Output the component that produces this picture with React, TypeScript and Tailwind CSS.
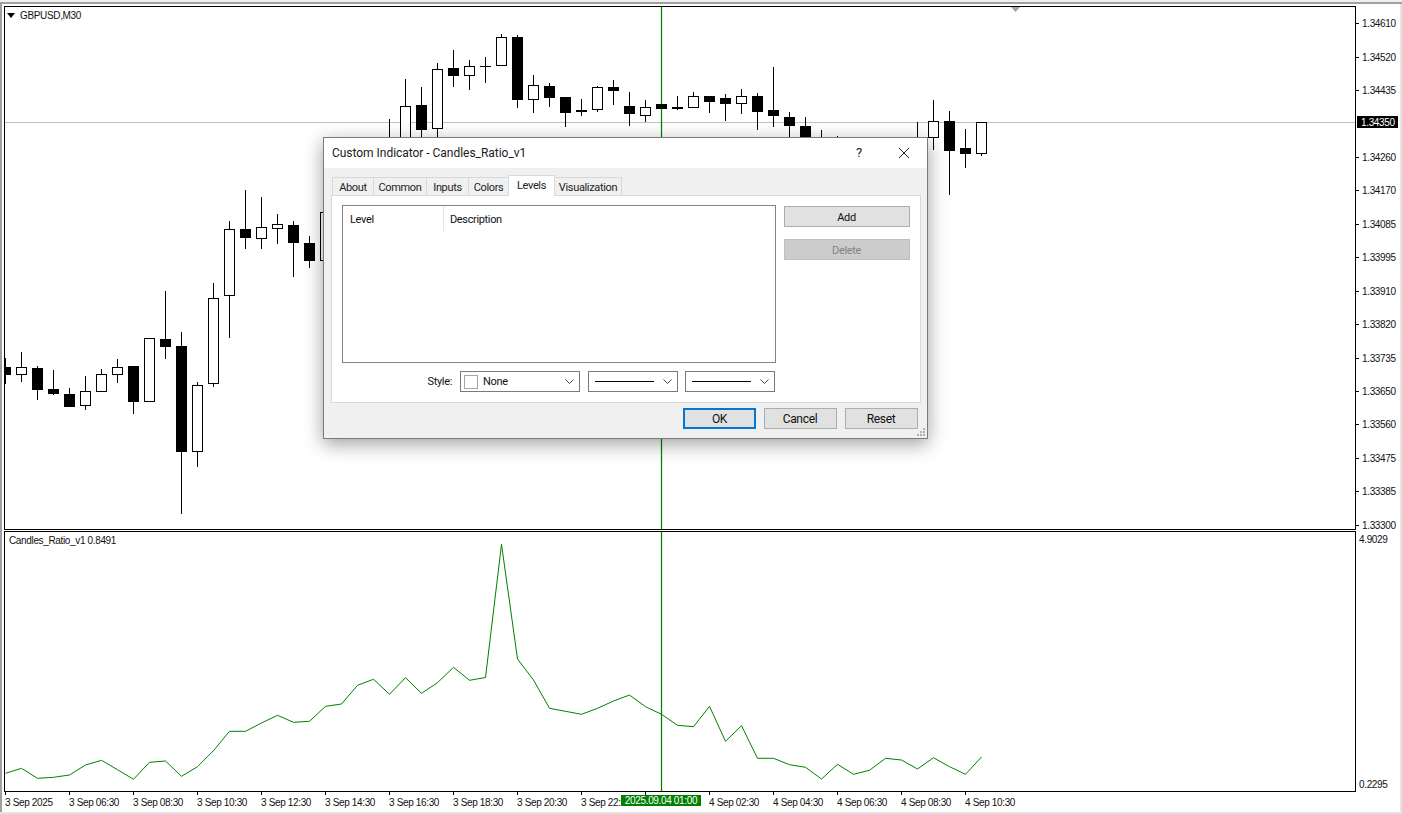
import React from "react";

type Candle = [number, number, number, number, number]; // x, bodyTop, bodyBottom, wickTop, wickBottom (x center)

const black: Candle[] = [
  [5, 367, 375, 358, 384],
  [37, 368, 390, 366, 400],
  [53, 389, 394, 370, 395],
  [69, 394, 407, 388, 407],
  [133, 366, 402, 366, 414],
  [165, 339, 347, 291, 359],
  [181, 346, 452, 332, 514],
  [245, 229, 238, 190, 249],
  [293, 225, 243, 221, 277],
  [309, 243, 261, 236, 268],
  [421, 105, 130, 87, 140],
  [453, 68, 76, 50, 87],
  [517, 37, 100, 35, 108],
  [549, 86, 98, 83, 107],
  [565, 97, 113, 97, 127],
  [581, 110, 112, 99, 116],
  [613, 87, 91, 80, 105],
  [629, 106, 114, 92, 126],
  [661, 104, 109, 104, 109],
  [677, 107, 109, 96, 110],
  [709, 96, 102, 96, 113],
  [725, 98, 104, 94, 121],
  [757, 96, 112, 93, 130],
  [773, 110, 116, 67, 127],
  [789, 117, 126, 112, 140],
  [805, 126, 140, 117, 140],
  [949, 121, 151, 111, 195],
  [965, 148, 154, 129, 168],
];

const white: Candle[] = [
  [21, 367, 375, 352, 382],
  [85, 391, 406, 376, 410],
  [101, 374, 392, 369, 392],
  [117, 367, 375, 359, 383],
  [149, 338, 402, 338, 402],
  [197, 385, 452, 382, 467],
  [213, 298, 384, 283, 387],
  [229, 229, 296, 221, 338],
  [261, 227, 239, 197, 249],
  [277, 224, 229, 214, 244],
  [325, 212, 261, 212, 261],
  [405, 106, 140, 79, 140],
  [437, 69, 129, 63, 140],
  [469, 66, 76, 60, 90],
  [501, 37, 66, 34, 66],
  [533, 85, 100, 75, 113],
  [597, 87, 110, 86, 112],
  [645, 107, 116, 100, 122],
  [693, 96, 108, 92, 108],
  [741, 96, 104, 89, 114],
  [933, 121, 138, 100, 150],
  [981, 122, 154, 122, 156],
];

const wicksOnly: [number, number, number][] = [
  [389, 119, 140],
  [821, 130, 140],
  [837, 136, 140],
  [917, 122, 140],
];

const dojis: [number, number, number, number][] = [
  [485, 66, 57, 83],
  [917, 137, 122, 140],
];

const line: [number, number][] = [
  [5, 773.3], [21, 768.3], [37, 778.3], [53, 777.3], [69, 775], [85, 765], [101, 760.3], [117, 769.7],
  [133, 779.3], [149, 762.3], [165, 761], [181, 776.3], [197, 766.7], [213, 750.7], [229, 731.3], [245, 731.3],
  [261, 723], [277, 715.3], [293, 722.3], [309, 721.3], [325, 706.3], [341, 704], [357, 685.3], [373, 679.3],
  [389, 694.3], [405, 677.7], [421, 693.3], [437, 682.7], [453, 667.3], [469, 680.3], [485, 677.5], [501, 544.3],
  [517, 659], [533, 680], [549, 708.3], [565, 711.3], [581, 714.3], [597, 708.3], [613, 701], [629, 695],
  [645, 706.7], [661, 714.3], [677, 725.3], [693, 726.7], [709, 706.3], [725, 741.3], [741, 725.7], [757, 758.3],
  [773, 758.3], [789, 764.7], [805, 767.3], [821, 779], [837, 764.3], [853, 774.3], [869, 770.3], [885, 758.3],
  [901, 760], [917, 769], [933, 757.7], [949, 766.7], [965, 774.3], [981, 757],
];

const prices = [
  "1.34610", "1.34520", "1.34435", "1.34350", "1.34260", "1.34170", "1.34085", "1.33995",
  "1.33910", "1.33820", "1.33735", "1.33650", "1.33560", "1.33475", "1.33385", "1.33300",
];

const times = [
  "3 Sep 2025", "3 Sep 06:30", "3 Sep 08:30", "3 Sep 10:30", "3 Sep 12:30", "3 Sep 14:30", "3 Sep 16:30",
  "3 Sep 18:30", "3 Sep 20:30", "3 Sep 22:", "", "4 Sep 02:30", "4 Sep 04:30", "4 Sep 06:30", "4 Sep 08:30",
  "4 Sep 10:30",
];

function PriceChart() {
  return (
    <svg width={1350} height={522} viewBox="5 7 1350 522" shapeRendering="crispEdges" className="block">
      <rect x={5} y={122} width={1350} height={1} fill="#c0c0c0" />
      <rect x={660.88} y={7} width={1.24} height={522} fill="#008000" shapeRendering="auto" />
      <polygon points="1011,7 1020,7 1015.5,12" fill="#a3a3a3" shapeRendering="auto" />
      {wicksOnly.map(([x, a, b]) => (
        <rect key={`w${x}`} x={x} y={a} width={1} height={b - a} fill="#000" />
      ))}
      {dojis.map(([x, y, a, b]) => (
        <g key={`d${x}`} fill="#000">
          <rect x={x} y={a} width={1} height={b - a} />
          <rect x={x - 5} y={y} width={11} height={1} />
        </g>
      ))}
      {black.map(([x, t, b, wt, wb]) => (
        <g key={`b${x}`} fill="#000">
          <rect x={x} y={wt} width={1} height={wb - wt} />
          <rect x={x - 5} y={t} width={11} height={b - t} />
        </g>
      ))}
      {white.map(([x, t, b, wt, wb]) => (
        <g key={`c${x}`}>
          <rect x={x} y={wt} width={1} height={wb - wt} fill="#000" />
          <rect x={x - 4.5} y={t + 0.5} width={10} height={b - t - 1} fill="#fff" stroke="#000" strokeWidth={1} />
        </g>
      ))}
    </svg>
  );
}

function RatioChart() {
  return (
    <svg width={1350} height={259} viewBox="5 532 1350 259" className="block">
      <rect x={660.88} y={532} width={1.24} height={259} fill="#008000" />
      <polyline
        points={line.map(([x, y]) => `${x + 0.5},${y}`).join(" ")}
        fill="none"
        stroke="#008000"
        strokeWidth={1}
      />
    </svg>
  );
}

function Chevron() {
  return (
    <svg width={9} height={6} viewBox="0 0 9 6" className="shrink-0">
      <polyline points="0.5,0.5 4.5,4.5 8.5,0.5" fill="none" stroke="#444" strokeWidth={1} />
    </svg>
  );
}

function Tab({ label, w, active }: { label: string; w: string; active?: boolean }) {
  return active ? (
    <div className={`${w} relative z-10 h-[21px] mb-[-1px] ml-[-1px] flex items-center justify-center bg-white border border-b-0 border-[#d9d9d9]`}>
      {label}
    </div>
  ) : (
    <div className={`${w} h-[18px] flex items-center justify-center pt-[3px] bg-[#f0f0f0] border border-b-0 border-[#d9d9d9] ml-[-1px] first:ml-0`}>
      {label}
    </div>
  );
}

function Dialog() {
  return (
    <div className="absolute left-[323px] top-[137px] w-[605px] h-[302px] flex flex-col bg-[#f0f0f0] border border-[#7a7a7a] shadow-[0_5px_18px_rgba(0,0,0,0.38)] text-[11px] tracking-[-0.35px] text-[#111] font-['Roboto',sans-serif]">
      <div className="h-[30px] shrink-0 bg-white flex items-center pl-[8px] text-[12px] tracking-[-0.03px] text-[#1a1a1a]">
        <span>Custom Indicator - Candles_Ratio_v1</span>
        <span className="ml-auto mr-[36px] text-[13px]">?</span>
        <svg width={12} height={12} viewBox="0 0 12 12" className="mr-[17px]">
          <path d="M1 1 L11 11 M11 1 L1 11" stroke="#222" strokeWidth={1} fill="none" />
        </svg>
      </div>
      <div className="flex-1 flex flex-col pl-[7px] pr-[6px]">
        <div className="flex items-end h-[27px] pl-[1px] shrink-0 text-[#222]">
          <Tab label="About" w="w-[42px]" />
          <Tab label="Common" w="w-[54px]" />
          <Tab label="Inputs" w="w-[43px]" />
          <Tab label="Colors" w="w-[41px]" />
          <Tab label="Levels" w="w-[47px]" active />
          <Tab label="Visualization" w="w-[68px]" />
        </div>
        <div className="w-[590px] h-[208px] bg-white border border-[#d9d9d9] pl-[10px] pt-[9px] flex flex-col">
          <div className="flex">
            <div className="w-[434px] h-[158px] border border-[#828282] bg-white flex items-start shrink-0">
              <div className="w-[101px] h-[25px] pl-[7px] pt-[3px] flex items-center border-r border-[#e5e5e5]">Level</div>
              <div className="h-[25px] pl-[6px] pt-[3px] flex items-center">Description</div>
            </div>
            <div className="ml-[8px] pt-[1px] flex flex-col gap-[12px]">
              <div className="w-[126px] h-[21px] pt-[3px] pr-[1px] flex items-center justify-center bg-[#e1e1e1] border border-[#adadad]">Add</div>
              <div className="w-[126px] h-[21px] pt-[3px] pr-[1px] flex items-center justify-center bg-[#cccccc] border border-[#bfbfbf] text-[#838383]">Delete</div>
            </div>
          </div>
          <div className="flex items-center h-[21px] mt-[8px]">
            <div className="w-[110px] text-right pt-px">Style:</div>
            <div className="ml-[8px] w-[120px] h-[21px] border border-[#7a7a7a] bg-white flex items-center pl-[3px] pr-[5px]">
              <div className="w-[14px] h-[14px] border border-[#a6a6a6] bg-white" />
              <span className="ml-[5px] flex-1 pt-[2px]">None</span>
              <Chevron />
            </div>
            <div className="ml-[8px] w-[90px] h-[21px] border border-[#7a7a7a] bg-white flex items-center pl-[6px] pr-[5px]">
              <div className="w-[59px] h-px bg-black" />
              <div className="flex-1" />
              <Chevron />
            </div>
            <div className="ml-[7px] w-[90px] h-[21px] border border-[#7a7a7a] bg-white flex items-center pl-[6px] pr-[5px]">
              <div className="w-[59px] h-px bg-black" />
              <div className="flex-1" />
              <Chevron />
            </div>
          </div>
        </div>
        <div className="flex justify-end gap-[8px] mt-[5px] pr-[3px] text-[12px] tracking-[-0.3px]">
          <div className="w-[73px] h-[21px] flex items-center justify-center bg-[#e1e1e1] border-2 border-[#0078d7]">OK</div>
          <div className="w-[73px] h-[21px] pr-[1px] flex items-center justify-center bg-[#e1e1e1] border border-[#adadad]">Cancel</div>
          <div className="w-[73px] h-[21px] pr-[1px] flex items-center justify-center bg-[#e1e1e1] border border-[#adadad]">Reset</div>
        </div>
      </div>
      <svg width={8} height={8} viewBox="0 0 8 8" className="absolute right-[2px] bottom-[2px]" fill="#b0b0b0" shapeRendering="crispEdges">
        <rect x={6} y={0} width={2} height={2} />
        <rect x={3} y={3} width={2} height={2} />
        <rect x={6} y={3} width={2} height={2} />
        <rect x={0} y={6} width={2} height={2} />
        <rect x={3} y={6} width={2} height={2} />
        <rect x={6} y={6} width={2} height={2} />
      </svg>
    </div>
  );
}

export default function App() {
  return (
    <div className="relative w-[1402px] h-[814px] overflow-hidden bg-white flex flex-col font-['Liberation_Sans',sans-serif] text-[10px] tracking-[-0.35px] text-[#111]">
      <div className="h-[2px] bg-[#f0f0f0] shrink-0" />
      <div className="h-[2px] bg-[#a0a0a0] shrink-0" />
      <div className="flex-1 flex border-r-2 border-[#e4e4e4]">
        <div className="w-[2px] bg-[#a0a0a0] shrink-0" />
        <div className="flex-1 flex flex-col pl-[2px] pt-[2px]">
          {/* Main pane */}
          <div className="flex h-[524px] shrink-0">
            <div className="relative w-[1352px] border border-black shrink-0">
              <PriceChart />
              <div className="absolute left-[2px] top-[1px] flex items-center gap-[5px]">
                <svg width={8} height={5} viewBox="0 0 8 5"><polygon points="0,0 8,0 4,5" fill="#000" /></svg>
                <span>GBPUSD,M30</span>
              </div>
            </div>
            <div className="flex flex-col pt-[1px]">
              {prices.map((p, i) => (
                <div key={p} className="h-[33.44px] flex items-center shrink-0">
                  {i === 3 ? (
                    <div className="ml-[1px] -translate-y-[2px] w-[41px] h-[12px] bg-black text-white flex items-center pl-[4px]">{p}</div>
                  ) : (
                    <>
                      <div className="w-[3px] h-px bg-black" />
                      <span className="ml-[3px]">{p}</span>
                    </>
                  )}
                </div>
              ))}
            </div>
          </div>
          {/* Indicator pane */}
          <div className="flex h-[261px] mt-[1px] shrink-0">
            <div className="relative w-[1352px] border border-black shrink-0">
              <RatioChart />
              <div className="absolute left-[4px] top-[1px]">Candles_Ratio_v1 0.8491</div>
            </div>
            <div className="flex flex-col justify-between pl-[3px] pt-[1px]">
              <span>4.9029</span>
              <span>0.2295</span>
            </div>
          </div>
          {/* Time axis */}
          <div className="relative flex h-[20px] shrink-0">
            {times.map((t, i) => (
              <div key={i} className="w-[64px] shrink-0 pl-px flex flex-col">
                <div className="w-px h-[3px] bg-black" />
                <span className="whitespace-nowrap">{t}</span>
              </div>
            ))}
            <div className="absolute left-[617px] top-[3px] w-[80px] h-[11px] bg-[#008000] text-white flex items-center justify-center">2025.09.04 01:00</div>
          </div>
        </div>
      </div>
      <div className="h-[2px] bg-[#e4e4e4] shrink-0" />
      <Dialog />
    </div>
  );
}
